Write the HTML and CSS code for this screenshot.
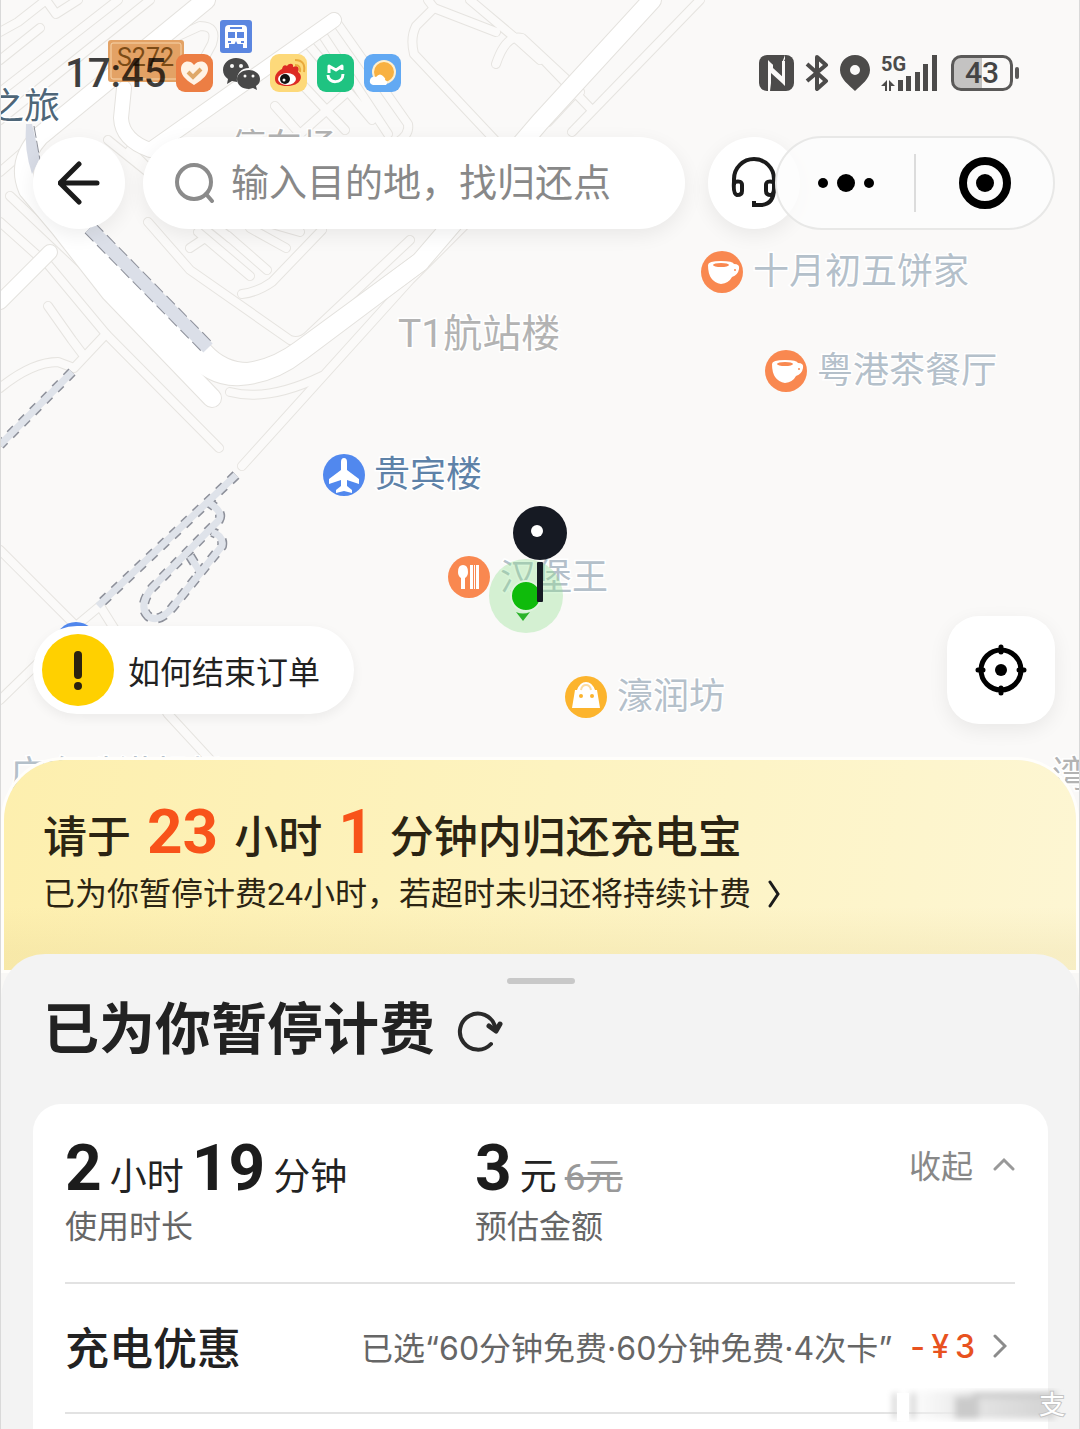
FILE: index.html
```html
<!DOCTYPE html>
<html lang="zh-CN">
<head>
  <meta charset="UTF-8">
  <meta name="viewport" content="width=device-width, initial-scale=1">
  <title>充电宝订单</title>
  <link rel="stylesheet" href="styles.css">
</head>
<body>
<div class="screen">

  <!-- 地图底图 -->
  <svg class="map-canvas" viewBox="0 0 1080 830" preserveAspectRatio="xMidYMin slice" aria-hidden="true">
    <defs>
      <g id="lanes">
        <path d="M0 32 L18 22 L46 0 M46 0 L56 14 L78 0"/>
        <path d="M0 92 L118 0 M0 120 L60 72 L150 0"/>
        <path d="M0 172 L30 146 M110 80 L165 42 L200 26 Q218 26 212 44 L200 66"/>
        <path d="M0 60 L40 28"/>
        <path d="M335 20 L408 124 Q410 134 398 142 M322 34 L388 134 M308 44 L372 120"/>
        <path d="M300 82 L345 130 M345 94 L300 134 M275 106 L300 134"/>
        <path d="M428 0 L434 8 L416 26 Q410 38 414 54 L540 188"/>
        <path d="M434 8 L496 32 M470 0 L520 42 L540 60 M496 64 Q506 34 522 38 L580 92"/>
        <path d="M108 140 L230 238 M130 150 L150 170 M10 196 L120 300 L140 320"/>
        <path d="M148 222 L190 270 L290 340 Q300 344 310 334 L410 240"/>
        <path d="M190 248 L202 240 M198 232 L250 276 M228 236 L267 270 M250 228 L286 248 M272 224 L300 232"/>
        <path d="M322 230 L272 282 Q258 292 242 294"/>
        <path d="M0 222 L38 256 M46 262 L106 334 L219 448"/>
        <path d="M48 306 L72 340 L84 356 M106 334 L74 368 L58 362 Q32 362 0 388"/>
        <path d="M242 466 L410 280 L490 200"/>
        <path d="M230 392 Q268 402 322 376"/>
        <path d="M700 0 L572 132 M540 56 L590 108 M576 92 L548 122"/>
        <path d="M0 550 L76 626 L0 700 M76 626 L100 606 L168 714 L216 766"/>
      </g>
      <g id="streets">
        <path d="M124 88 L121 118 Q122 140 150 150 L334 20"/>
        <path d="M0 302 L50 252"/>
      </g>
      <g id="avenues">
        <path d="M206 0 L40 136 Q16 162 28 190 L60 228 L110 292 L212 398"/>
        <path d="M80 226 L204 352 Q222 372 248 372 Q276 368 300 350 L420 262 L540 122 L652 0"/>
        <path d="M64 226 L190 352 Q212 378 240 376 Q272 374 300 352 L420 262"/>
      </g>
      <g id="tunnels">
        <path d="M72 372 L0 445"/>
        <path d="M236 475 L98 606"/>
        <path d="M208 502 Q224 512 219 520 L152 588 Q138 606 148 616 Q158 624 172 608 L222 546 Q224 536 212 532"/>
        <path d="M190 556 L200 572"/>
      </g>
    </defs>
    <use href="#lanes" class="lane-edge"/>
    <use href="#lanes" class="lane"/>
    <use href="#streets" class="street-edge"/>
    <use href="#streets" class="street"/>
    <use href="#avenues" class="avenue-edge"/>
    <use href="#avenues" class="avenue"/>
    <path class="bridge-edge" d="M90 228 L208 348"/>
    <path class="bridge" d="M90 228 L208 348"/>
    <path class="water" d="M26 124 L32 124 L40 158 L32 174 Q24 150 26 124Z"/>
    <path class="shore" d="M34 126 L40 160"/>
    <use href="#tunnels" class="tunnel-edge"/>
    <use href="#tunnels" class="tunnel"/>

    <!-- 路牌和公交站 -->
    <rect class="road-sign" x="108" y="40" width="76" height="42" rx="3"/>
    <rect class="road-sign-line" x="111" y="43" width="70" height="36" rx="2"/>
    <text class="road-no" x="117" y="66">S272</text>
    <rect class="bus" x="220" y="20" width="32" height="33" rx="3"/>
    <path class="glyph" d="M229 25h14q4 0 4 4v19h-4v-4h-14v4h-4V29q0-4 4-4Z"/>
    <path class="bus" d="M230 27h12v2h-12ZM228 32h7v6h-7ZM237 32h7v6h-7ZM228 41h3v2h-3ZM241 41h3v2h-3ZM233 47l3-6 3 6Z"/>

    <!-- 地点名称 -->
    <text class="place dark" x="-12" y="119">之旅</text>
    <text class="place grey" x="230" y="160">停车场</text>
    <text class="place grey terminal" x="398" y="347">T1航站楼</text>
    <text class="place" x="753" y="284">十月初五饼家</text>
    <text class="place" x="817" y="383">粤港茶餐厅</text>
    <text class="place blue" x="374" y="487">贵宾楼</text>
    <text class="place" x="500" y="590">汉堡王</text>
    <text class="place" x="617" y="709">濠润坊</text>
    <text class="place" x="10" y="787">广东珠港机场</text>
    <text class="place grey" x="1052" y="787">湾</text>
    <circle class="poi-blue" cx="76" cy="643" r="21"/>

    <g id="cup">
      <circle class="poi-orange" cx="722" cy="272" r="21"/>
      <path class="glyph" d="M708 265q0-4 13-4 12 0 13 3 6 0 5 5-1 6-7 8-3 6-11 7-13-2-13-19Z"/>
      <ellipse class="poi-orange" cx="721" cy="265" rx="8" ry="2"/>
      <circle class="poi-orange" cx="735" cy="270" r="1"/>
    </g>
    <use href="#cup" x="64" y="99"/>

    <circle class="poi-blue" cx="344" cy="475" r="21"/>
    <path class="glyph" d="M344 458q3 0 3 4v8l12 9v5l-12-4v6l5 4v3l-8-2-8 2v-3l5-4v-6l-12 4v-5l12-9v-8q0-4 3-4Z"/>

    <circle class="poi-orange" cx="469" cy="577" r="21"/>
    <path class="glyph" d="M463 565q5 0 5 7 0 4-3 6v11h-4v-11q-3-2-3-6 0-7 5-7ZM470 565h3v24h-3ZM474 565h1v24h-1ZM476 565h3v24h-3Z"/>

    <circle class="poi-yellow" cx="586" cy="697" r="21"/>
    <path class="glyph" d="M577 690q3-8 9-8t9 8h2l3 18h-28l3-18Z"/>
    <path class="bag-handle" d="M581 690q1-5 5-5t5 5"/>
    <circle class="poi-yellow" cx="581" cy="696" r="2"/>
    <circle class="poi-yellow" cx="592" cy="696" r="2"/>

    <!-- 当前位置 -->
    <circle class="here-range" cx="526" cy="596" r="37"/>
    <circle class="here" cx="526" cy="596" r="15"/>
    <path class="here-arrow" d="M516 612q7 3 14 0l-7 9Z"/>
    <rect class="pin" x="537" y="562" width="6" height="40" rx="1"/>
    <circle class="pin" cx="540" cy="533" r="27"/>
    <circle class="glyph" cx="537" cy="531" r="6"/>
  </svg>

  <header class="top">
    <div class="status">
      <span class="time">17:45</span>
      <svg class="app" viewBox="0 0 37 38" aria-hidden="true">
        <rect width="37" height="38" rx="9" fill="#ec7e44"/>
        <path d="M18 31C8 25 5 20 5 15c0-8 9-10 13-4 5-6 14-4 14 4 0 5-4 10-14 16Z" fill="#fff3e6"/>
        <path d="M12 18l5 5 8-8" fill="none" stroke="#dfa869" stroke-width="4"/>
      </svg>
      <svg class="app" viewBox="0 0 37 38" aria-hidden="true">
        <path d="M13 4C6 4 0 9 0 16c0 4 2 7 5 9l-1 5 5-3 5 1c-1-8 4-14 12-14C25 8 20 4 13 4Z" fill="#484848"/>
        <path d="M26 16c-7 0-12 4-12 9 0 6 5 10 12 10l4-1 4 2-1-4c3-2 4-4 4-7 0-5-5-9-11-9Z" fill="#484848"/>
        <g fill="#faf9f7"><circle cx="9" cy="12" r="2"/><circle cx="18" cy="12" r="2"/><circle cx="22" cy="22" r="1.500"/><circle cx="30" cy="22" r="1.500"/></g>
      </svg>
      <svg class="app" viewBox="0 0 37 38" aria-hidden="true">
        <rect width="37" height="38" rx="9" fill="#fdd97a"/>
        <path d="M5 25c0-5 3-8 7-10 1-5 4-4 5-3 2-3 7-3 6 1 4-2 7 0 5 5 6 4 3 14-11 14C10 32 5 30 5 25Z" fill="#dd2a24"/>
        <ellipse cx="17" cy="25" rx="9" ry="6" fill="#fff"/>
        <circle cx="15" cy="25" r="5" fill="#111"/><circle cx="14" cy="26" r="1.500" fill="#fff"/>
        <path d="M25 11q6 0 5 7M25 6q11 0 9 12" fill="none" stroke="#e9a93c" stroke-width="2"/>
      </svg>
      <svg class="app" viewBox="0 0 37 38" aria-hidden="true">
        <rect width="37" height="38" rx="9" fill="#1fc381"/>
        <path d="M12 19v-7l7 4 6-4v4M11 21c0 9 15 9 15-1" fill="none" stroke="#fff" stroke-width="3" stroke-linejoin="round"/>
      </svg>
      <svg class="app" viewBox="0 0 37 38" aria-hidden="true">
        <rect width="37" height="38" rx="9" fill="#62a9f3"/>
        <circle cx="20" cy="18" r="12" fill="#fff0cf"/><circle cx="20" cy="18" r="10" fill="#f8b142"/>
        <path d="M9 31q-4-1-3-5 1-4 6-3 4-5 8 0 2 2 1 3 4 2 1 5Z" fill="#fff"/>
      </svg>

      <div class="signals">
        <svg width="35" height="36" viewBox="0 0 35 36" aria-hidden="true">
          <rect width="35" height="36" rx="8" fill="#4c4b4a"/>
          <path d="M9 36V5l3 3 11 10V8l3-8v31l-3-3-11-10v10l-1 8Z" fill="#faf9f7"/>
          <path d="M14 13l12 11V4l-2 4v10L14 9Z" fill="#4c4b4a"/>
          <path d="M23 6h3v20h-3Z" fill="#faf9f7"/>
        </svg>
        <svg width="24" height="36" viewBox="0 0 24 36" aria-hidden="true">
          <path d="M2 9l19 17-9 8V2l9 8L2 26" fill="none" stroke="#4c4b4a" stroke-width="4" stroke-linejoin="round"/>
        </svg>
        <svg width="30" height="36" viewBox="0 0 30 36" aria-hidden="true">
          <path d="M15 0C6 0 0 7 0 15c0 9 9 15 15 21 6-6 15-12 15-21C30 7 24 0 15 0Zm0 10a5 5 0 1 1 0 10 5 5 0 0 1 0-10Z" fill="#4c4b4a"/>
        </svg>
        <div class="cell">
          <span class="net">5G</span>
          <svg width="57" height="36" viewBox="0 0 57 36" aria-hidden="true">
            <path d="M17 25h5v11h-5ZM25 21h5v15h-5ZM34 17h5v19h-5ZM42 9h5v27h-5ZM51 0h5v36h-5ZM6 25v11H4v-5H0ZM8 25l6 6h-4v5H8Z" fill="#4c4b4a"/>
          </svg>
        </div>
        <div class="battery"><span>43</span></div>
      </div>
    </div>

    <nav class="nav">
      <button class="round" aria-label="返回">
        <svg width="42" height="44" viewBox="0 0 42 44"><path d="M39 22H3M21 3L2 22l19 19" fill="none" stroke="#1b1b1b" stroke-width="5" stroke-linecap="round" stroke-linejoin="round"/></svg>
      </button>
      <label class="search">
        <svg width="40" height="40" viewBox="0 0 40 40" aria-hidden="true"><circle cx="19" cy="19" r="17" fill="none" stroke="#8b8b8b" stroke-width="4"/><path d="M31 31l6 7" stroke="#8b8b8b" stroke-width="4" stroke-linecap="round"/></svg>
        <input type="text" placeholder="输入目的地，找归还点" aria-label="搜索">
      </label>
      <button class="round" aria-label="客服">
        <svg width="48" height="52" viewBox="0 0 48 52"><path d="M4 28V22a20 20 0 0 1 40 0v9q0 17-14 17h-6v-4" fill="none" stroke="#1b1b1b" stroke-width="4"/><path d="M4 25q8-2 8 3v6q0 4-5 4-4-1-3-13ZM44 25q-8-2-8 3v6q0 4 5 4 4-1 3-13Z" fill="none" stroke="#1b1b1b" stroke-width="4"/></svg>
      </button>
      <div class="capsule">
        <button aria-label="更多">
          <svg width="56" height="20" viewBox="0 0 56 20"><circle cx="5" cy="10" r="5"/><circle cx="28" cy="10" r="9"/><circle cx="51" cy="10" r="5"/></svg>
        </button>
        <button aria-label="关闭">
          <svg width="54" height="54" viewBox="0 0 54 54"><circle cx="27" cy="27" r="22" fill="none" stroke="#000" stroke-width="8"/><circle cx="27" cy="27" r="9"/></svg>
        </button>
      </div>
    </nav>

    <div class="map-tools">
      <button class="tip">
        <svg width="72" height="72" viewBox="0 0 72 72" aria-hidden="true"><circle cx="36" cy="36" r="36" fill="#ffd000"/><path d="M36 21v20" stroke="#2b2210" stroke-width="8" stroke-linecap="round"/><circle cx="36" cy="52" r="4" fill="#2b2210"/></svg>
        如何结束订单
      </button>
      <button class="locate" aria-label="定位">
        <svg width="52" height="52" viewBox="0 0 52 52"><circle cx="26" cy="26" r="20" fill="none" stroke="#000" stroke-width="5"/><path d="M26 3v5M26 44v5M3 26h5M44 26h5" stroke="#000" stroke-width="5" stroke-linecap="round"/><circle cx="26" cy="26" r="6"/></svg>
      </button>
    </div>
  </header>

  <a class="notice" href="#">
    <p class="notice-title"><span>请于</span><b>23</b><span>小时</span><b>1</b><span>分钟内归还充电宝</span></p>
    <p class="notice-text">已为你暂停计费24小时，若超时未归还将持续计费
      <svg width="14" height="28" viewBox="0 0 14 28" aria-hidden="true"><path d="M3 2l8 12-8 12" fill="none" stroke="#1b1b1b" stroke-width="3" stroke-linecap="round"/></svg>
    </p>
  </a>

  <main class="panel">
    <div class="handle"></div>
    <div class="heading">
      <h1>已为你暂停计费</h1>
      <button aria-label="刷新">
        <svg width="46" height="44" viewBox="0 0 46 44"><path d="M34 36a18 18 0 1 1 4-18" fill="none" stroke="#2a2a2a" stroke-width="4" stroke-linecap="round"/><path d="M32 18l7 5 4-7" fill="none" stroke="#2a2a2a" stroke-width="5" stroke-linecap="round" stroke-linejoin="round"/></svg>
      </button>
    </div>

    <section class="card">
      <div class="stats">
        <div>
          <p class="value"><b>2</b><span>小时</span><b>19</b><span>分钟</span></p>
          <p class="label">使用时长</p>
        </div>
        <div>
          <p class="value"><b>3</b><span>元</span><del>6元</del></p>
          <p class="label">预估金额</p>
        </div>
        <button class="fold">收起
          <svg width="22" height="14" viewBox="0 0 22 14" aria-hidden="true"><path d="M2 12l9-9 9 9" fill="none" stroke="#999" stroke-width="3" stroke-linecap="round"/></svg>
        </button>
      </div>
      <button class="discount">
        <span class="name">充电优惠</span>
        <span class="chosen">已选“60分钟免费·60分钟免费·4次卡”</span>
        <span class="off"><span>-</span><span>¥</span><span>3</span></span>
        <svg width="14" height="24" viewBox="0 0 14 24" aria-hidden="true"><path d="M2 2l10 10L2 22" fill="none" stroke="#8b8b8b" stroke-width="3" stroke-linecap="round"/></svg>
      </button>
    </section>
  </main>

  <svg class="stamp" width="200" height="44" viewBox="0 0 200 44" aria-hidden="true">
    <defs>
      <linearGradient id="fade" x1="0" x2="1"><stop offset="0" stop-color="#fff" stop-opacity="0"/><stop offset=".5" stop-color="#e6e6e6"/><stop offset="1" stop-color="#d2d2d2"/></linearGradient>
      <filter id="soft"><feGaussianBlur stdDeviation="3"/></filter>
    </defs>
    <g filter="url(#soft)">
      <path d="M6 6h176v28H6Z" fill="url(#fade)"/>
      <path d="M20 8h4v26h-4ZM38 8h4v26h-4ZM82 12h24v22H82ZM100 8h84v5h-84Z" fill="#cacaca"/>
    </g>
    <path d="M24 8h12v28H24Z" fill="#fff"/>
    <text x="166" y="29">支</text>
  </svg>
</div>
</body>
</html>
```
FILE: styles.css
```css
* { box-sizing: border-box; }
body { margin: 0; background: #f9f8f6; color: #222; font-family: Roboto, "Noto Sans CJK SC", sans-serif; }
p, h1 { margin: 0; }
button { margin: 0; padding: 0; border: none; background: none; font: inherit; color: inherit; cursor: pointer; }
svg { display: block; flex: none; }
a { color: inherit; text-decoration: none; }

.screen { position: relative; display: flex; flex-direction: column; min-height: 100vh; overflow: hidden; border: solid #d9d9d9; border-width: 0 1px; }

/* map */
.map-canvas { position: absolute; top: 0; left: 0; width: 100%; height: 830px; background: #faf9f8; }
.map-canvas use { fill: none; stroke-linejoin: round; stroke-linecap: round; }
.lane-edge { stroke: #e6e4e0; stroke-width: 10px; }
.lane { stroke: #fbfaf9; stroke-width: 8px; }
.street-edge { stroke: #e4e2de; stroke-width: 16px; }
.street { stroke: #fff; stroke-width: 14px; }
.avenue-edge { stroke: #e4e2de; stroke-width: 20px; }
.avenue { stroke: #fff; stroke-width: 18px; }
.map-canvas .tunnel-edge { stroke: #8d909a; stroke-width: 10px; stroke-dasharray: 8 8; stroke-linecap: butt; }
.map-canvas .tunnel { stroke: #dfe3ea; stroke-width: 7px; stroke-linecap: butt; }
.bridge-edge { stroke: #8d909a; stroke-width: 15px; stroke-dasharray: 12 5; fill: none; }
.bridge { stroke: #dbdfe8; stroke-width: 13px; fill: none; }
.water { fill: #d8dce6; }
.shore { stroke: #8d909a; stroke-dasharray: 12 3; }
.road-sign { fill: #e3a265; }
.road-sign-line { fill: none; stroke: #f7d5ac; stroke-width: 1px; }
.road-no { font-size: 25px; fill: #7b4b16; }
.bus { fill: #5b86e0; }
.glyph { fill: #fff; }
.place { font-size: 36px; fill: #b4c0ca; stroke: #fff; stroke-width: 3px; paint-order: stroke; }
.place.grey { fill: #b3b3b3; }
.place.dark { fill: #4e6678; }
.place.blue { fill: #5e82a8; }
.place.terminal { font-size: 39px; }
.poi-orange { fill: #f98850; }
.poi-blue { fill: #5188ee; }
.poi-yellow { fill: #fcb42d; }
.bag-handle { fill: none; stroke: #fcdca0; stroke-width: 2px; }
.here-range { fill: #8ce08c; fill-opacity: .35; }
.here { fill: #0fbb0b; stroke: #dff3de; stroke-width: 2px; }
.here-arrow { fill: #2bb32a; }
.pin { fill: #161a23; }

/* top */
.top { position: relative; display: flex; flex-direction: column; min-height: 760px; padding: 54px 24px 36px 32px; }
.status { display: flex; align-items: center; gap: 10px; height: 38px; padding: 0 36px 0 32px; }
.time { font-size: 40px; font-weight: 500; color: rgba(0, 0, 0, .75); }
.app { width: 37px; height: 38px; }
.signals { display: flex; align-items: center; gap: 11px; margin-left: auto; }
.cell { position: relative; }
.net { position: absolute; top: -3px; left: 0; font-size: 20px; line-height: 24px; font-weight: 700; color: #4c4b4a; }
.battery { position: relative; width: 62px; height: 36px; margin: 0 6px 0 2px; border: 3px solid #5a5958; border-radius: 10px; background: linear-gradient(90deg, #c4c3c2 50%, transparent 50%); color: #444; font-size: 30px; line-height: 30px; font-weight: 500; text-align: center; }
.battery::after { content: ""; position: absolute; top: 9px; right: -9px; width: 4px; height: 12px; border-radius: 2px; background: #5a5958; }

.nav { display: flex; align-items: center; margin-top: 44px; }
.round { display: flex; flex: none; align-items: center; justify-content: center; width: 92px; height: 92px; border-radius: 50%; background: #fff; box-shadow: 0 6px 20px rgba(0, 0, 0, .07); }
.search { display: flex; flex: 1; align-items: center; gap: 16px; min-width: 0; height: 92px; margin: 0 23px 0 18px; padding: 0 32px; border-radius: 46px; background: #fff; box-shadow: 0 6px 20px rgba(0, 0, 0, .07); }
.search input { flex: 1; min-width: 0; padding: 0; border: none; outline: none; background: none; font: inherit; font-size: 38px; }
.search input::placeholder { color: #888; opacity: 1; }
.capsule { position: relative; display: flex; flex: none; align-items: center; width: 280px; height: 94px; margin-left: -25px; border: 2px solid #e8e8e7; border-radius: 47px; background: rgba(253, 253, 252, .8); }
.capsule button { display: flex; flex: 1; align-items: center; justify-content: center; height: 58px; }
.capsule button + button { border-left: 2px solid #dcdcdc; }

.map-tools { display: flex; align-items: center; justify-content: space-between; margin-top: auto; }
.tip { display: flex; align-items: center; gap: 14px; height: 88px; padding: 0 34px 0 9px; border-radius: 44px; background: #fff; box-shadow: 0 4px 12px rgba(0, 0, 0, .06); font-size: 32px; }
.locate { display: flex; align-items: center; justify-content: center; width: 108px; height: 108px; border-radius: 32px; background: #fff; box-shadow: 0 6px 20px rgba(0, 0, 0, .07); }

/* notice */
.notice { position: relative; display: block; margin: 0 3px; padding: 36px 39px 52px; border-radius: 60px 60px 0 0; background: linear-gradient(180deg, transparent 70%, rgba(225, 205, 140, .2) 92%), linear-gradient(100deg, #fdefae, #fdf3c0 50%, #fdf6d3); box-shadow: 0 0 0 3px #fffefb; color: #2b2413; }
.notice-title { display: flex; align-items: baseline; gap: 16px; height: 74px; font-size: 44px; line-height: 72px; font-weight: 500; }
.notice-title b { font-size: 62px; font-weight: 700; color: #f8531a; }
.notice-text { display: flex; align-items: center; gap: 16px; font-size: 32px; line-height: 48px; }

/* order panel */
.panel { position: relative; display: flex; flex: 1; flex-direction: column; margin-top: -16px; padding: 24px 31px 0 32px; border-radius: 44px 44px 0 0; background: #f3f3f3; }
.handle { align-self: center; width: 68px; height: 6px; border-radius: 3px; background: #c8c8c8; }
.heading { display: flex; align-items: center; gap: 22px; margin: 6px 0 34px 10px; }
.heading h1 { font-size: 56px; line-height: 80px; font-weight: 700; }
.card { flex: 1; padding: 0 33px 0 32px; border-radius: 28px 28px 0 0; background: #fff; }
.stats { display: grid; grid-template-columns: 410px 1fr auto; padding: 30px 0 32px; border-bottom: 2px solid #e2e2e2; }
.value { display: flex; align-items: baseline; gap: 8px; height: 70px; font-size: 37px; line-height: 70px; }
.value b { font-size: 64px; font-weight: 700; color: #1c1c1c; }
.value del { color: #999; }
.label { font-size: 32px; line-height: 46px; color: #666; }
.fold { display: flex; align-items: center; align-self: start; gap: 20px; height: 60px; font-size: 32px; color: #888; }
.discount { display: flex; align-items: center; width: 100%; height: 130px; padding: 0 8px 4px 0; border-bottom: 2px solid #e2e2e2; text-align: left; font-size: 32px; }
.discount .name { flex: 1; font-size: 44px; font-weight: 500; }
.chosen, .off { font-family: Inter, "Noto Sans CJK SC", sans-serif; }
.chosen { color: #666; }
.off { display: flex; gap: 6px; margin: 0 18px; font-weight: 500; color: #e8521f; }

.stamp { position: absolute; right: 6px; bottom: 0; }
.stamp text { font-size: 26px; fill: #fff; stroke: #c4c4c4; stroke-width: 2px; paint-order: stroke; }
```
